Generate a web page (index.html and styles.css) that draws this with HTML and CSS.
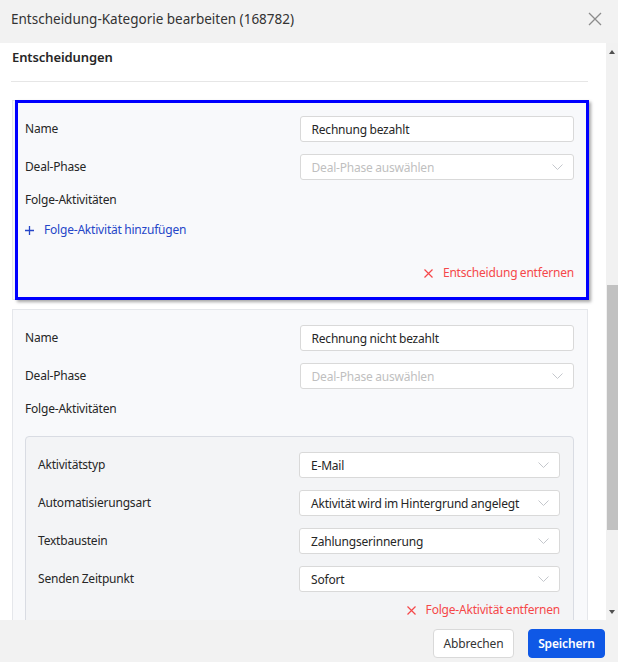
FILE: index.html
```html
<!DOCTYPE html>
<html lang="de">
<head>
<meta charset="utf-8">
<title>Entscheidung-Kategorie bearbeiten</title>
<link rel="stylesheet" href="styles.css">
</head>
<body>
<div class="modal">
  <header class="modal-header">
    <h1 class="modal-title">Entscheidung-Kategorie bearbeiten (168782)</h1>
    <button class="close-btn" aria-label="Schließen">
      <svg width="14" height="14" viewBox="0 0 14 14"><path d="M1 1L13 13M13 1L1 13" stroke="#8c8c8c" stroke-width="1.3" fill="none"/></svg>
    </button>
  </header>
  <div class="modal-body">
    <div class="content">
      <div class="section-title">Entscheidungen</div>

      <div class="card card-first">
        <div class="grid">
          <label class="label">Name</label>
          <div class="input">Rechnung bezahlt</div>
          <label class="label">Deal-Phase</label>
          <div class="input select placeholder">Deal-Phase auswählen<svg class="chev" width="11" height="6" viewBox="0 0 11 6"><path d="M0.5 0.5L5.5 5.5L10.5 0.5" stroke="#c4c7cc" stroke-width="1" fill="none"/></svg></div>
        </div>
        <div class="label label-row">Folge-Aktivitäten</div>
        <a class="add-link"><svg width="9" height="9" viewBox="0 0 9 9"><path d="M4.5 0V9M0 4.5H9" stroke="#2546c8" stroke-width="1.3"/></svg><span>Folge-Aktivität hinzufügen</span></a>
        <div class="remove-row remove-decision"><a class="remove-link"><svg width="9" height="9" viewBox="0 0 9 9"><path d="M0.5 0.5L8.5 8.5M8.5 0.5L0.5 8.5" stroke="#f5484a" stroke-width="1.2"/></svg><span>Entscheidung entfernen</span></a></div>
        <div class="highlight"></div>
      </div>

      <div class="card">
        <div class="grid">
          <label class="label">Name</label>
          <div class="input">Rechnung nicht bezahlt</div>
          <label class="label">Deal-Phase</label>
          <div class="input select placeholder">Deal-Phase auswählen<svg class="chev" width="11" height="6" viewBox="0 0 11 6"><path d="M0.5 0.5L5.5 5.5L10.5 0.5" stroke="#c4c7cc" stroke-width="1" fill="none"/></svg></div>
        </div>
        <div class="label label-row">Folge-Aktivitäten</div>
        <div class="activity">
          <div class="grid">
            <label class="label">Aktivitätstyp</label>
            <div class="input select">E-Mail<svg class="chev" width="11" height="6" viewBox="0 0 11 6"><path d="M0.5 0.5L5.5 5.5L10.5 0.5" stroke="#c4c7cc" stroke-width="1" fill="none"/></svg></div>
            <label class="label">Automatisierungsart</label>
            <div class="input select">Aktivität wird im Hintergrund angelegt<svg class="chev" width="11" height="6" viewBox="0 0 11 6"><path d="M0.5 0.5L5.5 5.5L10.5 0.5" stroke="#c4c7cc" stroke-width="1" fill="none"/></svg></div>
            <label class="label">Textbaustein</label>
            <div class="input select">Zahlungserinnerung<svg class="chev" width="11" height="6" viewBox="0 0 11 6"><path d="M0.5 0.5L5.5 5.5L10.5 0.5" stroke="#c4c7cc" stroke-width="1" fill="none"/></svg></div>
            <label class="label">Senden Zeitpunkt</label>
            <div class="input select">Sofort<svg class="chev" width="11" height="6" viewBox="0 0 11 6"><path d="M0.5 0.5L5.5 5.5L10.5 0.5" stroke="#c4c7cc" stroke-width="1" fill="none"/></svg></div>
          </div>
          <div class="remove-row remove-activity"><a class="remove-link"><svg width="9" height="9" viewBox="0 0 9 9"><path d="M0.5 0.5L8.5 8.5M8.5 0.5L0.5 8.5" stroke="#f5484a" stroke-width="1.2"/></svg><span>Folge-Aktivität entfernen</span></a></div>
        </div>
      </div>
    </div>
    <div class="scrollbar">
      <div class="arrow arrow-up"></div>
      <div class="track"><div class="thumb"></div></div>
      <div class="arrow arrow-down"></div>
    </div>
  </div>
  <footer class="modal-footer">
    <button class="btn btn-default">Abbrechen</button>
    <button class="btn btn-primary">Speichern</button>
  </footer>
</div>
</body>
</html>
```
FILE: styles.css
```css
* { box-sizing: border-box; }
html, body { margin: 0; padding: 0; }
body {
  width: 618px;
  height: 662px;
  overflow: hidden;
  font-family: "Noto Sans", "Open Sans", sans-serif;
  font-size: 12px;
  color: #262626;
  background: #ffffff;
}
.modal {
  display: flex;
  flex-direction: column;
  width: 618px;
  height: 662px;
}
.modal-header {
  height: 43px;
  flex: none;
  background: #f2f2f2;
  display: flex;
  align-items: center;
  justify-content: space-between;
  padding: 0 16px 0 11px;
}
.modal-title {
  margin: 0;
  font-size: 13.5px;
  font-weight: 400;
  color: #333333;
  line-height: 20px;
  position: relative;
  top: -3px;
}
.close-btn {
  border: 0;
  background: none;
  padding: 0;
  width: 14px;
  height: 14px;
  display: flex;
  position: relative;
  top: -3px;
}
.modal-body {
  flex: 1;
  display: flex;
  min-height: 0;
}
.content {
  flex: 1;
  overflow: hidden;
  background: #ffffff;
  padding: 0 18px 0 11px;
  letter-spacing: -0.2px;
  word-spacing: -0.4px;
}
.section-title {
  font-size: 13px;
  font-weight: 600;
  line-height: 20px;
  padding: 4px 0 14px 1px;
  border-bottom: 1px solid #e6e6e6;
  color: #262626;
  letter-spacing: -0.1px;
}
.card {
  position: relative;
  margin-left: 1px;
  background: #f8f9fb;
  border: 1px solid #e5e7eb;
  padding: 15px 13px 15px 12px;
  margin-bottom: 9px;
}
.card-first {
  margin-top: 18px;
  padding-bottom: 18px;
}
.grid {
  display: grid;
  grid-template-columns: 1fr 1fr;
  row-gap: 12px;
  align-items: center;
}
.label {
  line-height: 16px;
  color: #262626;
}
.label-row {
  margin-top: 12px;
}
.input {
  height: 26px;
  background: #ffffff;
  border: 1px solid #d9d9d9;
  border-radius: 3px;
  padding: 0 10px 0 11px;
  display: flex;
  align-items: center;
  justify-content: space-between;
  color: #262626;
  white-space: nowrap;
}
.placeholder { color: #bfbfbf; }
.chev { flex: none; }
.add-link {
  display: flex;
  align-items: center;
  gap: 10px;
  margin-top: 14px;
  line-height: 16px;
  color: #2546c8;
  cursor: pointer;
}
.remove-row {
  display: flex;
  justify-content: flex-end;
}
.remove-decision { margin-top: 27px; }
.remove-activity { margin-top: 10px; }
.remove-link {
  display: flex;
  align-items: center;
  gap: 10px;
  line-height: 16px;
  color: #f5484a;
  cursor: pointer;
}
.activity {
  margin-top: 19px;
  background: #f3f4f6;
  border: 1px solid #d9dce3;
  border-radius: 4px;
  padding: 15px 13px 15px 12px;
}
.highlight {
  position: absolute;
  top: -1px;
  left: 2px;
  right: -2px;
  bottom: -1px;
  border: 3px solid #0000ff;
  box-shadow: 2px 2px 3px rgba(0, 0, 0, 0.35);
  pointer-events: none;
}
.scrollbar {
  width: 12px;
  flex: none;
  background: #f1f1f1;
  display: flex;
  flex-direction: column;
}
.arrow {
  height: 17px;
  flex: none;
  display: flex;
  justify-content: center;
  align-items: center;
}
.arrow::before {
  content: "";
  width: 0;
  height: 0;
  border-left: 3.5px solid transparent;
  border-right: 3.5px solid transparent;
}
.arrow-up::before { border-bottom: 4px solid #505050; }
.arrow-down::before { border-top: 4px solid #505050; }
.track {
  flex: 1;
  position: relative;
  padding-left: 1px;
}
.thumb {
  margin-top: 225px;
  height: 245px;
  background: #c1c1c1;
}
.modal-footer {
  height: 42px;
  flex: none;
  background: #f2f2f2;
  display: flex;
  justify-content: flex-end;
  align-items: flex-start;
  gap: 14px;
  padding: 9px 13px 0 0;
}
.btn {
  height: 29px;
  border-radius: 4px;
  font-family: "Noto Sans", "Open Sans", sans-serif;
  font-size: 12px;
  letter-spacing: -0.15px;
  padding: 0;
  cursor: pointer;
}
.btn-default {
  width: 81px;
  background: #ffffff;
  border: 1px solid #d9d9d9;
  color: #333333;
}
.btn-primary {
  width: 77px;
  background: #0f58e6;
  border: 1px solid #0f58e6;
  color: #ffffff;
  font-weight: 600;
}
```
